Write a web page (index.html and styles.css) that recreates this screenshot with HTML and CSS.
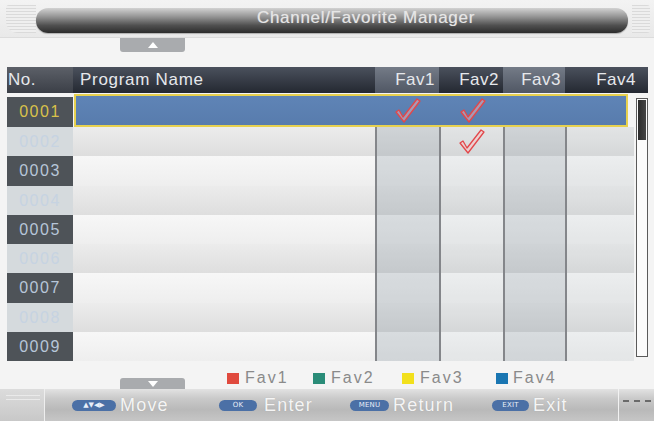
FILE: index.html
```html
<!DOCTYPE html>
<html>
<head>
<meta charset="utf-8">
<link rel="stylesheet" href="styles.css">
</head>
<body>
<div class="page">
  <div class="top">
    <div class="deco deco-l"></div>
    <div class="pill"><span class="title">Channel/Favorite Manager</span></div>
    <div class="deco deco-r"></div>
  </div>
  <div class="tab tab-up"><svg width="10" height="6" viewBox="0 0 10 6"><polygon points="5,0 10,6 0,6" fill="#fff"/></svg></div>

  <div class="table">
    <div class="head">
      <div class="hc h-no">No.</div>
      <div class="hc h-name">Program Name</div>
      <div class="hc h-fav light">Fav1</div>
      <div class="hc h-fav dark">Fav2</div>
      <div class="hc h-fav light">Fav3</div>
      <div class="hc h-fav dark last">Fav4</div>
    </div>
    <div class="list">
      <div class="rows">
        <div class="row sel">
          <div class="num">0001</div>
          <div class="hl">
            <div class="hl-name"></div>
            <div class="hl-fav"><svg class="check" width="26" height="25" viewBox="0 0 26 25"><polygon points="1,14 4,12 8,19 22,1 25,3 9,24" fill="#f2b4b8" fill-opacity="0.5" stroke="#e2474a" stroke-width="1.3" stroke-linejoin="round"/></svg></div>
            <div class="hl-fav"><svg class="check" width="26" height="25" viewBox="0 0 26 25"><polygon points="1,14 4,12 8,19 22,1 25,3 9,24" fill="#f2b4b8" fill-opacity="0.5" stroke="#e2474a" stroke-width="1.3" stroke-linejoin="round"/></svg></div>
            <div class="hl-fav"></div>
            <div class="hl-fav"></div>
          </div>
        </div>
        <div class="row even">
          <div class="num">0002</div><div class="name"></div>
          <div class="fav f1"></div>
          <div class="fav f2"><svg class="check" width="26" height="25" viewBox="0 0 26 25"><polygon points="1,14 4,12 8,19 22,1 25,3 9,24" fill="#f6c8c8" fill-opacity="0.6" stroke="#e2474a" stroke-width="1.3" stroke-linejoin="round"/></svg></div>
          <div class="fav f3"></div><div class="fav f4"></div>
        </div>
        <div class="row odd">
          <div class="num">0003</div><div class="name"></div>
          <div class="fav f1"></div><div class="fav f2"></div><div class="fav f3"></div><div class="fav f4"></div>
        </div>
        <div class="row even">
          <div class="num">0004</div><div class="name"></div>
          <div class="fav f1"></div><div class="fav f2"></div><div class="fav f3"></div><div class="fav f4"></div>
        </div>
        <div class="row odd">
          <div class="num">0005</div><div class="name"></div>
          <div class="fav f1"></div><div class="fav f2"></div><div class="fav f3"></div><div class="fav f4"></div>
        </div>
        <div class="row even">
          <div class="num">0006</div><div class="name"></div>
          <div class="fav f1"></div><div class="fav f2"></div><div class="fav f3"></div><div class="fav f4"></div>
        </div>
        <div class="row odd">
          <div class="num">0007</div><div class="name"></div>
          <div class="fav f1"></div><div class="fav f2"></div><div class="fav f3"></div><div class="fav f4"></div>
        </div>
        <div class="row even">
          <div class="num">0008</div><div class="name"></div>
          <div class="fav f1"></div><div class="fav f2"></div><div class="fav f3"></div><div class="fav f4"></div>
        </div>
        <div class="row odd">
          <div class="num">0009</div><div class="name"></div>
          <div class="fav f1"></div><div class="fav f2"></div><div class="fav f3"></div><div class="fav f4"></div>
        </div>
      </div>
      <div class="scroll"><div class="thumb"></div></div>
    </div>
  </div>

  <div class="legend">
    <div class="tab tab-down"><svg width="10" height="6" viewBox="0 0 10 6"><polygon points="0,0 10,0 5,6" fill="#fff"/></svg></div>
    <div class="lg"><span class="sq red"></span>Fav1</div>
    <div class="lg"><span class="sq teal"></span>Fav2</div>
    <div class="lg"><span class="sq yellow"></span>Fav3</div>
    <div class="lg"><span class="sq blue"></span>Fav4</div>
  </div>

  <div class="bar">
    <div class="box-l"><span class="ln"></span><span class="ln"></span></div>
    <div class="key k1"><span class="btn arrows">▲▼◀▶</span><span class="klabel">Move</span></div>
    <div class="key k2"><span class="btn">OK</span><span class="klabel">Enter</span></div>
    <div class="key k3"><span class="btn">MENU</span><span class="klabel">Return</span></div>
    <div class="key k4"><span class="btn">EXIT</span><span class="klabel">Exit</span></div>
    <div class="box-r"><span class="dash"></span></div>
  </div>
</div>
</body>
</html>
```

FILE: styles.css
```css
* { box-sizing: border-box; }
html, body { margin: 0; padding: 0; }
body {
  width: 654px;
  height: 421px;
  overflow: hidden;
  background: #f4f4f4;
  font-family: "Liberation Sans", Arial, sans-serif;
}
.page {
  display: flex;
  flex-direction: column;
  width: 654px;
  height: 421px;
}

/* Title area */
.top {
  display: flex;
  height: 38px;
  background: linear-gradient(#f3f3f3, #e9e9e9);
  border-bottom: 1px solid #dcdcdc;
}
.deco {
  margin-top: 5px;
  height: 28px;
  background: repeating-linear-gradient(#dadada 0 1px, #efefef 1px 3px);
}
.deco-l {
  width: 30px;
  margin-left: 6px;
  border-radius: 3px 0 0 12px;
}
.deco-r {
  width: 18px;
  margin-left: 4px;
  border-radius: 0 3px 3px 0;
}
.pill {
  flex: 0 0 592px;
  height: 25px;
  margin-top: 8px;
  border-radius: 12px;
  background: linear-gradient(#d2d2d2 0%, #949494 35%, #4f4f4f 70%, #2c2c2c 100%);
  box-shadow: 0 1px 1px rgba(0,0,0,0.25);
  display: flex;
  justify-content: center;
  align-items: flex-start;
  padding-left: 68px;
}
.title {
  color: #e6e6e6;
  font-size: 17px;
  letter-spacing: 0.7px;
  line-height: 20px;
  text-shadow: 0 0 1px rgba(255,255,255,0.4);
}

/* Scroll tabs */
.tab {
  width: 65px;
  height: 14px;
  margin-left: 120px;
  background: #a9abae;
  border-radius: 0 0 3px 3px;
  display: flex;
  align-items: center;
  justify-content: center;
}
.tab-down {
  height: 11px;
  margin-top: 17px;
  border-radius: 3px 3px 0 0;
  flex: 0 0 65px;
}

/* Table */
.table {
  margin-top: 15px;
  margin-left: 7px;
  width: 641px;
}
.head {
  display: grid;
  grid-template-columns: 66px 302px 64px 64px 62px 1fr;
  height: 26px;
}
.hc {
  color: #e6e8ec;
  font-size: 17px;
  letter-spacing: 0.5px;
  line-height: 26px;
  white-space: nowrap;
}
.h-no {
  background: linear-gradient(#5c6068, #3b3f47);
  padding-left: 1px;
}
.h-name {
  background: linear-gradient(#4b515d, #242831);
  padding-left: 7px;
  letter-spacing: 0.7px;
}
.h-fav { text-align: right; padding-right: 4px; }
.h-fav.light { background: linear-gradient(#747b87, #505764); }
.h-fav.dark { background: linear-gradient(#4b515d, #242831); }
.h-fav.last { padding-right: 12px; }

.list {
  display: flex;
}
.rows {
  width: 627px;
}
.row {
  display: grid;
  grid-template-columns: 66px 302px 64px 64px 62px 1fr;
  height: 29.25px;
}
.row.sel {
  height: 34px;
  grid-template-columns: 66px 1fr;
}
.num {
  font-size: 16px;
  letter-spacing: 1.5px;
  text-align: center;
  line-height: 29px;
}
.row.odd .num { background: #4e5358; color: #b7c6d9; }
.row.even .num { background: #d5dadd; color: #c6d3e2; }
.row.sel .num {
  background: #4e5358;
  color: #d9c24a;
  margin-top: 4px;
  height: 30px;
  line-height: 30px;
}
.hl {
  margin: 1px 6px 0 1px;
  height: 33px;
  border: 2px solid #e7d14f;
  background: linear-gradient(#5f84b6, #587cad);
  display: grid;
  grid-template-columns: 299px 66px 64px 62px 1fr;
}
.hl-fav {
  display: flex;
  justify-content: center;
  align-items: center;
}
.row.even { background: linear-gradient(#ececec, #dedede); }
.row.odd { background: linear-gradient(#f7f7f7, #eeeeee); }
.fav {
  border-left: 2px solid #84868a;
  display: flex;
  justify-content: center;
  align-items: center;
}
.fav.f1, .fav.f3 { background: rgba(118, 134, 146, 0.24); }
.fav.f2, .fav.f4 { background: rgba(160, 170, 178, 0.12); }
.check { display: block; }

.scroll {
  width: 12px;
  height: 259px;
  margin-left: 2px;
  margin-top: 5px;
  border: 1px solid #5a5a5a;
  background: #fbfbfb;
  padding: 1px;
}
.thumb {
  height: 40px;
  background: linear-gradient(90deg, #2c2c2c, #454545);
}

/* Legend */
.legend {
  display: flex;
  height: 28px;
}
.lg {
  display: flex;
  align-items: center;
  height: 16px;
  margin-top: 9px;
  color: #8a8a8a;
  font-size: 16px;
  letter-spacing: 2px;
  line-height: 16px;
}
.lg:nth-child(2) { margin-left: 42px; width: 86px; }
.lg:nth-child(3) { width: 89px; }
.lg:nth-child(4) { width: 94px; }
.sq {
  display: inline-block;
  width: 12px;
  height: 11px;
  margin-right: 6px;
}
.sq.red { background: #e04a3e; }
.sq.teal { background: #2a8c78; }
.sq.yellow { background: #f2e01c; }
.sq.blue { background: #1a76b2; margin-right: 5px; }

/* Bottom bar */
.bar {
  display: flex;
  align-items: center;
  height: 32px;
  background: linear-gradient(#e2e2e2 0%, #c9c9c9 30%, #b9b9b9 65%, #c6c6c6 100%);
}
.box-l {
  align-self: stretch;
  width: 45px;
  border-right: 1px solid #eeeeee;
  background: linear-gradient(#dcdcdc, #c8c8c8);
  display: flex;
  flex-direction: column;
  padding-top: 6px;
  gap: 3px;
}
.box-l .ln {
  display: block;
  height: 1px;
  margin-left: 6px;
  width: 34px;
  background: #eaeaea;
}
.key {
  display: flex;
  align-items: center;
  height: 100%;
}
.k1 { margin-left: 27px; width: 147px; }
.k2 { width: 131px; }
.k3 { width: 142px; }
.k4 { width: 125px; }
.btn {
  display: inline-flex;
  align-items: center;
  justify-content: center;
  height: 11px;
  padding: 0 6px;
  border-radius: 6px;
  background: #4b70a6;
  color: #e8eef8;
  font-size: 7px;
  font-family: "DejaVu Sans", sans-serif;
  letter-spacing: 0.2px;
}
.k1 .btn { width: 44px; padding: 0; font-size: 7px; letter-spacing: 0; }
.k2 .btn { width: 38px; }
.k3 .btn { width: 39px; padding: 0; }
.k4 .btn { width: 37px; }
.klabel {
  margin-left: 4px;
  color: #f5f5f5;
  font-size: 18px;
  letter-spacing: 1.2px;
  text-shadow: 0 0 1px rgba(0,0,0,0.15);
}
.k2 .klabel { margin-left: 7px; }
.box-r {
  align-self: stretch;
  margin-left: auto;
  width: 36px;
  border-left: 1px solid #f2f2f2;
  padding-top: 11px;
  padding-left: 4px;
}
.dash {
  display: block;
  width: 28px;
  border-top: 2px dashed #6a6a6a;
}
```
